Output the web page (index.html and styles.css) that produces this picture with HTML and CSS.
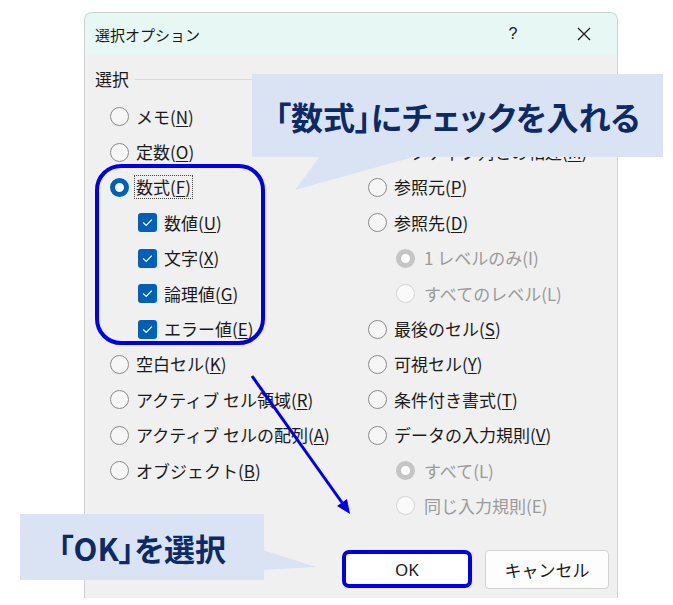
FILE: index.html
```html
<!DOCTYPE html>
<html lang="ja">
<head>
<meta charset="utf-8">
<link rel="stylesheet" href="styles.css">
</head>
<body>
<div class="stage">
  <div class="dialog">
    <div class="titlebar">
      <span class="title">選択オプション</span>
      <span class="help">?</span>
      <span class="close"><svg width="14" height="14" viewBox="0 0 14 14"><path d="M1 1 L13 13 M13 1 L1 13" stroke="#1a1a1a" stroke-width="1.2" fill="none"/></svg></span>
    </div>
    <div class="group-head"><span class="group-label">選択</span><span class="group-line"></span></div>
    <div class="cols">
      <div class="col col-left">
        <div class="row"><span class="radio"></span><span class="lbl">メモ(<u>N</u>)</span></div>
        <div class="row"><span class="radio"></span><span class="lbl">定数(<u>O</u>)</span></div>
        <div class="row"><span class="radio checked"></span><span class="lbl focus">数式(<u>F</u>)</span></div>
        <div class="row sub"><span class="check"><svg width="19" height="19" viewBox="0 0 19 19"><path d="M5.2 9.6 L8.2 12.4 L13.8 6.6" stroke="#fff" stroke-width="1.3" fill="none"/></svg></span><span class="lbl">数値(<u>U</u>)</span></div>
        <div class="row sub"><span class="check"><svg width="19" height="19" viewBox="0 0 19 19"><path d="M5.2 9.6 L8.2 12.4 L13.8 6.6" stroke="#fff" stroke-width="1.3" fill="none"/></svg></span><span class="lbl">文字(<u>X</u>)</span></div>
        <div class="row sub"><span class="check"><svg width="19" height="19" viewBox="0 0 19 19"><path d="M5.2 9.6 L8.2 12.4 L13.8 6.6" stroke="#fff" stroke-width="1.3" fill="none"/></svg></span><span class="lbl">論理値(<u>G</u>)</span></div>
        <div class="row sub"><span class="check"><svg width="19" height="19" viewBox="0 0 19 19"><path d="M5.2 9.6 L8.2 12.4 L13.8 6.6" stroke="#fff" stroke-width="1.3" fill="none"/></svg></span><span class="lbl">エラー値(<u>E</u>)</span></div>
        <div class="row"><span class="radio"></span><span class="lbl">空白セル(<u>K</u>)</span></div>
        <div class="row"><span class="radio"></span><span class="lbl">アクティブ セル領域(<u>R</u>)</span></div>
        <div class="row"><span class="radio"></span><span class="lbl">アクティブ セルの配列(<u>A</u>)</span></div>
        <div class="row"><span class="radio"></span><span class="lbl">オブジェクト(<u>B</u>)</span></div>
      </div>
      <div class="col col-right">
        <div class="row"><span class="radio"></span><span class="lbl covered">アクティブ行との相違(<u>W</u>)</span></div>
        <div class="row"><span class="radio"></span><span class="lbl">アクティブ列との相違(<u>M</u>)</span></div>
        <div class="row"><span class="radio"></span><span class="lbl">参照元(<u>P</u>)</span></div>
        <div class="row"><span class="radio"></span><span class="lbl">参照先(<u>D</u>)</span></div>
        <div class="row sub disabled"><span class="radio dis-checked"></span><span class="lbl">1 レベルのみ(I)</span></div>
        <div class="row sub disabled"><span class="radio dis"></span><span class="lbl">すべてのレベル(L)</span></div>
        <div class="row"><span class="radio"></span><span class="lbl">最後のセル(<u>S</u>)</span></div>
        <div class="row"><span class="radio"></span><span class="lbl">可視セル(<u>Y</u>)</span></div>
        <div class="row"><span class="radio"></span><span class="lbl">条件付き書式(<u>T</u>)</span></div>
        <div class="row"><span class="radio"></span><span class="lbl">データの入力規則(<u>V</u>)</span></div>
        <div class="row sub disabled"><span class="radio dis-checked"></span><span class="lbl">すべて(L)</span></div>
        <div class="row sub disabled"><span class="radio dis"></span><span class="lbl">同じ入力規則(E)</span></div>
      </div>
    </div>
    <div class="buttons">
      <span class="btn btn-ok">OK</span>
      <span class="btn btn-cancel">キャンセル</span>
    </div>
  </div>

  <svg class="overlay" width="673" height="605" viewBox="0 0 673 605">
    <polygon points="320,156 295,190 417,156" fill="#dae3f3"/>
    <polygon points="263,550 316,567 263,570" fill="#dae3f3"/>
    <line x1="252" y1="376" x2="343" y2="504" stroke="#0000e6" stroke-width="3"/>
    <polygon points="350,514 337,506 347,499" fill="#0000e6"/>
  </svg>
  <div class="highlight"></div>
  <div class="callout callout-1">「数式」にチェックを入れる</div>
  <div class="callout callout-2">「OK」を選択</div>
</div>
</body>
</html>
```

FILE: styles.css
```css
html, body {
  margin: 0;
  padding: 0;
  background: #ffffff;
}
.stage {
  position: relative;
  width: 673px;
  height: 605px;
  overflow: hidden;
  font-family: "Noto Sans CJK JP", "Noto Sans", sans-serif;
  color: #1a1a1a;
}
.dialog {
  margin: 12px 0 0 84px;
  width: 534px;
  height: 586px;
  box-sizing: border-box;
  border: 1px solid #cfcfcf;
  border-bottom: none;
  border-radius: 8px 8px 0 0;
  background: #f0f0f0;
  display: flex;
  flex-direction: column;
  overflow: hidden;
}
.titlebar {
  height: 42px;
  flex: none;
  background: #e6f7f4;
  display: flex;
  align-items: center;
  padding-left: 10px;
}
.title {
  flex: 1;
  font-size: 15px;
}
.help {
  width: 40px;
  text-align: center;
  font-size: 16px;
  font-family: "Liberation Sans", sans-serif;
  margin-right: 28px;
}
.close {
  width: 46px;
  display: flex;
  justify-content: center;
  align-items: center;
  margin-right: 10px;
}
.group-head {
  margin-top: 13px;
  height: 22px;
  display: flex;
  align-items: center;
  padding-left: 10px;
  padding-right: 12px;
}
.group-label {
  font-size: 17px;
  line-height: 22px;
}
.group-line {
  flex: 1;
  height: 1px;
  background: #d9d9d9;
  margin-left: 6px;
}
.cols {
  margin-top: 9px;
  display: flex;
  padding-left: 25px;
}
.col-left {
  width: 258px;
}
.row {
  height: 35.4px;
  display: flex;
  align-items: center;
  font-size: 17px;
  white-space: nowrap;
}
.row.sub {
  padding-left: 28px;
}
.lbl {
  margin-left: 7px;
  line-height: 22px;
}
.lbl.covered {
  visibility: hidden;
}
.lbl u {
  text-underline-offset: 2px;
  text-decoration-thickness: 1px;
}
.focus {
  outline: 1px dotted #444;
  outline-offset: 0;
  padding: 0 1px;
  margin-left: 6px;
}
.radio {
  width: 19px;
  height: 19px;
  box-sizing: border-box;
  border-radius: 50%;
  border: 1px solid #8a8a8a;
  background: #f6f6f6;
  flex: none;
}
.radio.checked {
  border: 5.5px solid #005fb8;
  background: #ffffff;
}
.radio.dis-checked {
  border: 5.5px solid #c5c5c5;
  background: #ffffff;
}
.radio.dis {
  border: 1px solid #d4d4d4;
  background: #fafafa;
}
.disabled .lbl {
  color: #9a9a9a;
  margin-left: 9px;
}
.check {
  width: 19px;
  height: 19px;
  border-radius: 3px;
  background: #005fb8;
  flex: none;
  display: flex;
}
.buttons {
  margin-top: auto;
  display: flex;
  justify-content: flex-end;
  gap: 13px;
  padding: 0 8px 9px 0;
}
.btn {
  height: 38px;
  box-sizing: border-box;
  display: flex;
  align-items: center;
  justify-content: center;
  font-size: 17px;
  background: #fdfdfd;
}
.btn-ok {
  width: 130px;
  border: 4px solid #0000e6;
  border-radius: 7px;
  background: #ffffff;
  font-family: "Noto Sans", sans-serif;
}
.btn-cancel {
  width: 124px;
  height: 39px;
  border: 1px solid #d2d2d2;
  border-radius: 4px;
}
.overlay {
  position: absolute;
  left: 0;
  top: 0;
}
.highlight {
  position: absolute;
  left: 95px;
  top: 164px;
  width: 170px;
  height: 181px;
  box-sizing: border-box;
  border: 4px solid #0000e6;
  border-radius: 26px;
}
.callout {
  position: absolute;
  background: #dae3f3;
  color: #0b2a66;
  font-weight: bold;
  display: flex;
  align-items: center;
  justify-content: center;
  font-feature-settings: "palt";
  white-space: nowrap;
}
.callout-1 {
  left: 252px;
  top: 74px;
  width: 411px;
  height: 83px;
  font-size: 32px;
}
.callout-2 {
  left: 20px;
  top: 514px;
  width: 244px;
  height: 66px;
  font-size: 31px;
}
```
